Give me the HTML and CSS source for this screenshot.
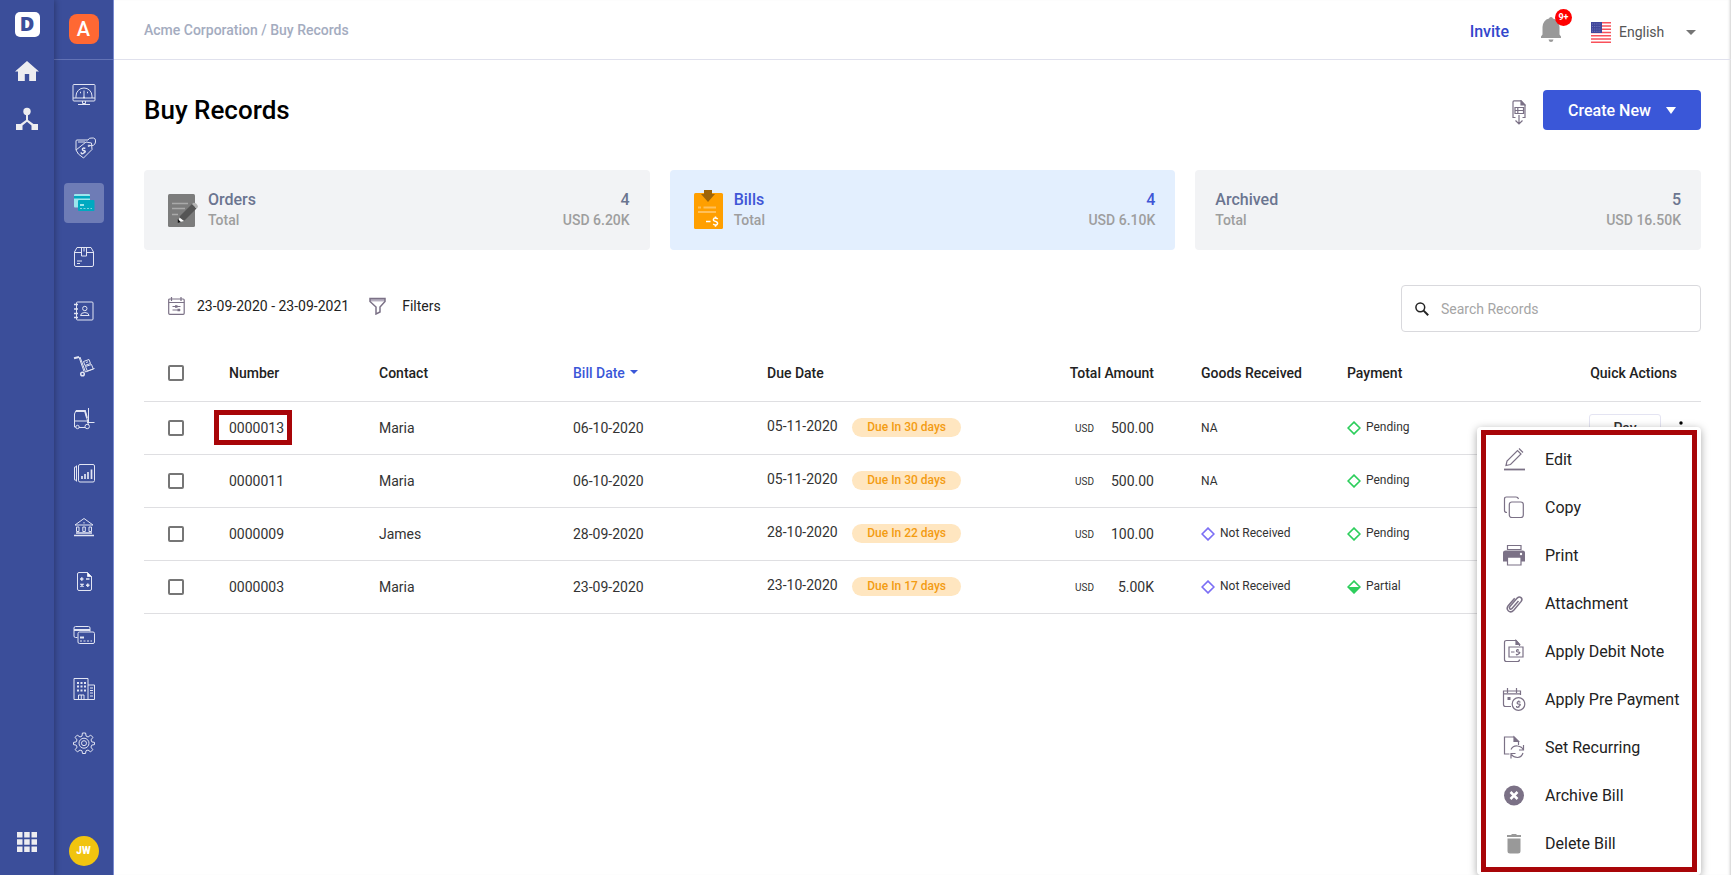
FILE: index.html
```html
<!DOCTYPE html>
<html lang="en">
<head>
    <meta charset="UTF-8">
    <meta name="viewport" content="width=device-width, initial-scale=1.0">
    <title>Buy Records</title>
    <link rel="stylesheet" href="styles.css">
</head>
<body>
    <div class="app">
        <!-- Main rail -->
        <nav class="rail rail-main" aria-label="Main">
            <a href="#" class="logo" aria-label="Start">D</a>
            <a href="#" class="rail-link" aria-label="Home">
                <svg width="24" height="24" viewBox="0 0 24 24" fill="#ededf0"><path d="M12 2L0 12.400h3V22h6.800v-7h4.400v7H21v-9.600h3z"/></svg>
            </a>
            <a href="#" class="rail-link" aria-label="Network">
                <svg width="24" height="24" viewBox="0 0 24 24" fill="#ededf0"><circle cx="12" cy="4.500" r="3.700"/><path d="M11 7h2v6l5.500 4H23v6h-6.500v-4.500L12 14.800l-4.500 3.700V23H1v-6h4.500l5.500-4z"/></svg>
            </a>
            <a href="#" class="rail-link rail-bottom" aria-label="Apps">
                <svg width="20" height="20" viewBox="0 0 20 20" fill="#ededf0"><path d="M0 0h5.500v5.500H0zM7.200 0h5.500v5.500H7.200zM14.500 0H20v5.500h-5.500zM0 7.200h5.500v5.500H0zM7.200 7.200h5.500v5.500H7.200zM14.500 7.200H20v5.500h-5.500zM0 14.500h5.500V20H0zM7.200 14.500h5.500V20H7.200zM14.500 14.500H20V20h-5.500z"/></svg>
            </a>
        </nav>

        <!-- Company rail -->
        <nav class="rail rail-company" aria-label="Company">
            <div class="company"><a href="#" class="company-logo" aria-label="Acme Corporation">A</a></div>
            <div class="modules">
                <a href="#" class="module" aria-label="Dashboard">
                    <svg class="line" viewBox="0 0 24 24"><rect x="1" y="1.500" width="22" height="16.500" rx="1"/><path d="M1 15h22M4 15v-2a8 8 0 0 1 16 0v2M10.500 18v2.500h3V18M6 21.500h12M12 7.500v7"/><path d="M7 13h.01M8 9.500h1M15 9.500h1M17 13h.01M11 14.500h2" stroke-width="1.600"/></svg>
                </a>
                <a href="#" class="module" aria-label="Sell">
                    <svg class="line" viewBox="0 0 24 24"><path d="M4 13V4q0-1 1-1h11M4 13l10-8 5.500 1 .5 6.500L11.500 21Q5 17 4 13z"/><path d="M6 5h7M17.500 9.500h-1.200v-1.300h1.200M17 8.500q6 1 6.500-3.500T20 1q-3-.5-4 2"/><path d="M13.300 11.500q-2.500-1-2.800.5t1.800 1.800-.5 2.200-2.600-.8" stroke-width="1.500"/></svg>
                </a>
                <a href="#" class="module active" aria-label="Buy">
                    <svg viewBox="0 0 24 24"><rect x="2" y="3" width="16" height="13.500" rx="1" fill="#9ce5ec"/><path d="M2 5h16v2.500H2z" fill="#00a9c0"/><rect x="6" y="9" width="16.500" height="11" rx="1" fill="#00a9c0"/><path d="M8 13h4v2H8z" fill="#9ce5ec"/><path d="M8 17.500h12" stroke="#7fd5df" stroke-dasharray="2 1.500"/></svg>
                </a>
                <a href="#" class="module" aria-label="Inventory">
                    <svg class="line" viewBox="0 0 24 24"><path d="M2.500 7L5 2.500h14L21.500 7v13q0 1.500-1.500 1.500H4q-1.500 0-1.500-1.500zM2.500 7.500h7M14.500 7.500h7M9.500 2.500V11h5V2.500M12 2.500v4M5 16h5M5 18.500h3"/></svg>
                </a>
                <a href="#" class="module" aria-label="Contacts">
                    <svg class="line" viewBox="0 0 24 24"><rect x="4.500" y="3" width="16.500" height="18" rx="1"/><circle cx="12.800" cy="9.500" r="2.200"/><path d="M8.500 16.500q.5-3 4.300-3t4.300 3z"/><path d="M2 5.500h4M2 10h4M2 14.500h4M2 18.500h4" stroke-width="1.700"/></svg>
                </a>
                <a href="#" class="module" aria-label="Shipping">
                    <svg class="line" viewBox="0 0 24 24"><path d="M8 4l5.500 15 9-3.500M7 4l5 14.500"/><path d="M2 5.200L7 4" stroke-width="2.200"/><circle cx="10.500" cy="21" r="1.800" stroke-width="1.500"/><path d="M11.500 8.500l5.500-2 1.500 4-5.500 2zM13.500 13.500l6-2 1.800 4.500-6 2zM14 9.500l2-.7"/></svg>
                </a>
                <a href="#" class="module" aria-label="Warehouse">
                    <svg class="line" viewBox="0 0 24 24"><path d="M4 20H2.500V7L4 3.500h9L16.500 18M2.500 14h13M7 20.500h6M16.500 1v14.500M15 15.500h7.500"/><path d="M4 4h9l2 7" stroke-width="1.800"/><circle cx="5.500" cy="20" r="1.700"/><circle cx="15.200" cy="19.500" r="2.200"/></svg>
                </a>
                <a href="#" class="module" aria-label="Reports">
                    <svg class="line" viewBox="0 0 24 24"><rect x="6.500" y="3.500" width="16" height="17.500" rx="1.500"/><path d="M4.500 4.500v16M2.500 6.500v12M2 6.500l2.500-1M2 18.500l2.500 1"/><path d="M10 18v-3M13 18v-5M16 18v-7M19.500 18V8.500" stroke-width="1.700"/></svg>
                </a>
                <a href="#" class="module" aria-label="Banking">
                    <svg class="line" viewBox="0 0 24 24"><path d="M3 10L12 3.500l9 6.500zM12 7v1.500M4.500 12v4.500h2.500V12zM10.800 12v4.500h2.500V12zM17 12v4.500h2.500V12z"/><path d="M4 18h16M2 20.500h20" stroke-width="1.500"/></svg>
                </a>
                <a href="#" class="module" aria-label="Accounting">
                    <svg class="line" viewBox="0 0 24 24"><path d="M15.500 3.500H7Q5.500 3.500 5.500 5v15Q5.500 21.500 7 21.500h11q1.500 0 1.500-1.500V7.500z"/><path d="M15.500 3.500v4h4z" fill="#fff"/><path d="M8 10h3.500M9.800 8.300v3.500M14 10h3.500M8.500 14.800l3 3M11.500 14.800l-3 3M14 16.300h3.500M15.800 14.500v3.500" stroke-width="1.500"/></svg>
                </a>
                <a href="#" class="module" aria-label="Expenses">
                    <svg class="line" viewBox="0 0 24 24"><path d="M5.500 14.500H3.500Q2 14.500 2 13V5Q2 3.500 3.500 3.500h13Q18 3.500 18 5v3.500"/><path d="M2 7h16" stroke-width="2"/><rect x="6" y="9" width="16.500" height="11.500" rx="1.500"/><path d="M8 14.500h4" stroke-width="2"/><path d="M8 18h12" stroke-dasharray="2 1.500"/></svg>
                </a>
                <a href="#" class="module" aria-label="Organisation">
                    <svg class="line" viewBox="0 0 24 24"><path d="M2 1.500h14v21H2zM16 8h6.500v14.500H16M18 11h3M18 13.500h3M18 16h3M18 19h3M6.500 22v-4h5.500v4M9.300 18v4"/><path d="M5 6h9M5 9.500h9M5 13.500h9" stroke-width="2" stroke-dasharray="2 1.500"/></svg>
                </a>
                <a href="#" class="module" aria-label="Settings">
                    <svg class="line" viewBox="0 0 24 24"><path d="M10.400 2h3.200l.5 3.100 2 .9 2.600-1.900 2.200 2.200L19 8.900l.8 2 2.700.5v2.200l-2.700.5-.9 2 1.900 2.600-2.200 2.200-2.600-1.900-2 .8-.5 2.700h-3l-.5-2.700-2-.8-2.600 1.900-2.200-2.200 1.900-2.600-.9-2-2.700-.5v-2.200l2.700-.5.8-2-1.900-2.600 2.200-2.200L8 6l2-.9z"/><circle cx="12" cy="12.200" r="5"/><circle cx="12" cy="12.200" r="2.500"/></svg>
                </a>
            </div>
            <a href="#" class="avatar" aria-label="Profile">JW</a>
        </nav>

        <div class="main">
            <header class="topbar">
                <div class="breadcrumb">Acme Corporation / Buy Records</div>
                <a href="#" class="invite">Invite</a>
                <button class="bell" aria-label="Notifications">
                    <svg width="20" height="26" viewBox="0 0 20 26" fill="#999"><path d="M10 0Q8.300 0 8 1.500 2 3 1.500 10v7.500L0 19.500V21h20v-1.500l-1.500-2V10Q18 3 12 1.500 11.700 0 10 0zM7.500 22.500h5q-.5 2.500-2.500 2.500t-2.500-2.500z"/></svg>
                    <span class="bell-count">9+</span>
                </button>
                <div class="language">
                    <svg width="20" height="21" viewBox="0 0 20 21"><path fill="#fff" d="M0 0h20v21H0z"/><path stroke="#f9505a" stroke-width="1.600" d="M0 .8h20M0 4h20M0 7.200h20M0 10.500h20M0 13.700h20M0 17h20M0 20.200h20"/><path fill="#41479b" d="M0 0h11v11H0z"/><path stroke="#7f85c4" stroke-width=".8" stroke-dasharray="1 1.200" d="M1 2h9M1 4.500h9M1 7h9M1 9.300h9"/></svg>
                    <select aria-label="Language"><option>English</option></select>
                    <svg class="language-arrow" width="10" height="5" viewBox="0 0 10 5"><path fill="#757575" d="M0 0h10L5 5z"/></svg>
                </div>
            </header>

            <main class="content">
                <div class="page-head">
                    <h1>Buy Records</h1>
                    <button class="export" aria-label="Export">
                        <svg width="14" height="26" viewBox="0 0 14 26" fill="none" stroke="#7b7186" stroke-width="1.200"><path d="M3.500 17.500H1V2Q1 .8 2 .8h7L13 5v12.500h-2.500M3 7.500h8.500v6H3zM3 10.500h8.500M5.800 7.500v6M7 15v9M3.500 20.500L7 24l3.500-3.500"/><path d="M9 .8V5h4z" fill="#7b7186"/></svg>
                    </button>
                    <button class="create">Create New <svg width="10" height="7" viewBox="0 0 10 7" fill="#fff"><path d="M0 0h10L5 7z"/></svg></button>
                </div>

                <!-- Totals -->
                <div class="cards">
                    <a href="#" class="card">
                        <svg class="card-icon" width="32" height="40" viewBox="0 0 32 40"><rect y="4" width="27" height="33" rx="1.500" fill="#7c7c7c"/><path d="M4 13.500h16M4 18.500h13M4 24.500h6" stroke="#a9a9a9" stroke-width="1.500"/><path d="M10 32l2-6L24 14l4.500 4.500-12 12z" fill="#555"/><path d="M24 14l1.500-1.200q3.500 0 4.500 4.200l-1.500 1.500z" fill="#b5b5b5"/><path d="M10 32.500l1.500-5 4.500 3.500z" fill="#fff"/><path d="M9.800 33v-4l3 3z" fill="#111"/></svg>
                        <span class="card-text"><b>Orders</b><small>Total</small></span>
                        <span class="card-text card-sum"><b>4</b><small>USD 6.20K</small></span>
                    </a>
                    <a href="#" class="card selected">
                        <svg class="card-icon" width="32" height="40" viewBox="0 0 32 40"><rect y="3" width="29" height="36" rx="1.500" fill="#ff9f00"/><path d="M10 0h8v4h3l-7 8-7-8h3z" fill="#9e6408"/><path d="M4 17.500h3M9.500 17.500H22M4 22h18" stroke="#ffc05a" stroke-width="1.800"/><path d="M12 31.500h4.500" stroke="#fff" stroke-width="1.500"/><path d="M23.800 29q-2-1.600-3.600-.8-1.600 1.500 0 2.700l2.400 1q1.800 1.500.2 2.900-1.700.8-3.600-.8M21.500 26.500v2M21.500 34.800v2" fill="none" stroke="#fff" stroke-width="1.500"/></svg>
                        <span class="card-text"><b>Bills</b><small>Total</small></span>
                        <span class="card-text card-sum"><b>4</b><small>USD 6.10K</small></span>
                    </a>
                    <a href="#" class="card">
                        <span class="card-text"><b>Archived</b><small>Total</small></span>
                        <span class="card-text card-sum"><b>5</b><small>USD 16.50K</small></span>
                    </a>
                </div>

                <div class="toolbar">
                    <button class="tool">
                        <svg width="17" height="18" viewBox="0 0 17 18" fill="none" stroke="#7b7186"><rect x=".7" y="2" width="15.500" height="15.300" rx="1" stroke-width="1.200"/><path d="M.7 5.500h15.500M3.500 0v4M13 0v4" stroke-width="1.200"/><path d="M4.500 9.500h8M4.500 13h8"/><path d="M7 9.500h2.500M9.500 13H12" stroke-width="2.600"/></svg>
                        23-09-2020 - 23-09-2021
                    </button>
                    <button class="tool tool-filter">
                        <svg width="17" height="18" viewBox="0 0 17 18" fill="none" stroke="#7b7186" stroke-width="1.500"><path d="M1 3.200h15" stroke="#b7b0c0" stroke-width="2.500"/><path d="M1 1.500h15v3L11 10v5l-4 2V10L1 4.500z"/></svg>
                        Filters
                    </button>
                    <label class="search">
                        <svg width="14" height="14" viewBox="0 0 14 14" fill="none" stroke="#222" stroke-width="1.500"><circle cx="5.300" cy="5.300" r="4.400"/><path d="M8.600 8.600l4.600 4.600" stroke-width="2"/></svg>
                        <input type="text" placeholder="Search Records" aria-label="Search Records">
                    </label>
                </div>

                <!-- Bills table -->
                <table class="records">
                    <colgroup>
                        <col class="col-check"><col class="col-number"><col class="col-contact"><col class="col-date"><col class="col-due"><col class="col-amount"><col class="col-goods"><col class="col-payment"><col class="col-actions">
                    </colgroup>
                    <thead>
                        <tr>
                            <th class="check"><input type="checkbox" aria-label="Select all"></th>
                            <th>Number</th>
                            <th>Contact</th>
                            <th class="sorted">Bill Date <svg width="8" height="4" viewBox="0 0 8 4"><path fill="#3a57d8" d="M0 0h8L4 4z"/></svg></th>
                            <th>Due Date</th>
                            <th class="amount">Total Amount</th>
                            <th>Goods Received</th>
                            <th>Payment</th>
                            <th class="actions">Quick Actions</th>
                        </tr>
                    </thead>
                    <tbody>
                        <tr>
                            <td class="check"><input type="checkbox" aria-label="Select 0000013"></td>
                            <td><span class="marked">0000013</span></td>
                            <td>Maria</td>
                            <td>06-10-2020</td>
                            <td>05-11-2020 <span class="due">Due In 30 days</span></td>
                            <td class="amount"><small>USD</small><span>500.00</span></td>
                            <td class="status">NA</td>
                            <td class="status"><svg viewBox="0 0 13 13"><path d="M6.500 1L12 6.500 6.500 12 1 6.500z" fill="none" stroke="#2dce5c" stroke-width="1.500"/></svg>Pending</td>
                            <td class="row-actions"><button class="pay">Pay</button><button class="more" aria-label="More"><svg width="4" height="16" viewBox="0 0 4 16"><circle cx="2" cy="2" r="1.700"/><circle cx="2" cy="8" r="1.700"/><circle cx="2" cy="14" r="1.700"/></svg></button></td>
                        </tr>
                        <tr>
                            <td class="check"><input type="checkbox" aria-label="Select 0000011"></td>
                            <td>0000011</td>
                            <td>Maria</td>
                            <td>06-10-2020</td>
                            <td>05-11-2020 <span class="due">Due In 30 days</span></td>
                            <td class="amount"><small>USD</small><span>500.00</span></td>
                            <td class="status">NA</td>
                            <td class="status"><svg viewBox="0 0 13 13"><path d="M6.500 1L12 6.500 6.500 12 1 6.500z" fill="none" stroke="#2dce5c" stroke-width="1.500"/></svg>Pending</td>
                            <td></td>
                        </tr>
                        <tr>
                            <td class="check"><input type="checkbox" aria-label="Select 0000009"></td>
                            <td>0000009</td>
                            <td>James</td>
                            <td>28-09-2020</td>
                            <td>28-10-2020 <span class="due">Due In 22 days</span></td>
                            <td class="amount"><small>USD</small><span>100.00</span></td>
                            <td class="status"><svg viewBox="0 0 13 13"><path d="M6.500 1L12 6.500 6.500 12 1 6.500z" fill="none" stroke="#7c6ff5" stroke-width="1.500"/></svg>Not Received</td>
                            <td class="status"><svg viewBox="0 0 13 13"><path d="M6.500 1L12 6.500 6.500 12 1 6.500z" fill="none" stroke="#2dce5c" stroke-width="1.500"/></svg>Pending</td>
                            <td></td>
                        </tr>
                        <tr>
                            <td class="check"><input type="checkbox" aria-label="Select 0000003"></td>
                            <td>0000003</td>
                            <td>Maria</td>
                            <td>23-09-2020</td>
                            <td>23-10-2020 <span class="due">Due In 17 days</span></td>
                            <td class="amount"><small>USD</small><span>5.00K</span></td>
                            <td class="status"><svg viewBox="0 0 13 13"><path d="M6.500 1L12 6.500 6.500 12 1 6.500z" fill="none" stroke="#7c6ff5" stroke-width="1.500"/></svg>Not Received</td>
                            <td class="status"><svg viewBox="0 0 13 13"><path d="M6.500 1L12 6.500 6.500 12 1 6.500z" fill="none" stroke="#2dce5c" stroke-width="1.500"/><path d="M1 6.500h11L6.500 12z" fill="#2dce5c"/></svg>Partial</td>
                            <td></td>
                        </tr>
                    </tbody>
                </table>

                <!-- Row menu -->
                <div class="menu">
                    <button><svg viewBox="0 0 24 24"><path d="M4 18.500l1-4.500L15.500 3.500l3.500 3.500L8.500 17.500zM17 1.500l4 4"/><path d="M2 22.500h21" stroke-width="1.800"/></svg>Edit</button>
                    <button><svg viewBox="0 0 24 24"><path d="M5 17.500Q2.500 17.500 2.500 15.500V4q0-2 2-2h9.500q2 0 2.500 2"/><rect x="7.300" y="7" width="14" height="15.500" rx="2.500"/></svg>Copy</button>
                    <button><svg viewBox="0 0 24 24"><path d="M5.500 2.500H19v4H5.500zM5.500 14H19v8H5.500z"/><path d="M3.500 7.500h17q2.500 0 2.500 2v9h-4v-4H5.500v4H1v-9q0-2 2.500-2z" fill="#7b7186" stroke="none"/><circle cx="19" cy="11" r="1.200" fill="#fff" stroke="none"/></svg>Print</button>
                    <button><svg viewBox="0 0 24 24"><path d="M15.500 9l-6.300 7.200q-1.200 1.500-2.300.6t0-2.300l7.300-8.400q2-2 3.800-.5t.2 3.800l-7.500 8.800q-2.700 2.900-5.200.8t-.3-5.200l6.500-7.500" transform="translate(1 1)" stroke-width="1.500"/></svg>Attachment</button>
                    <button><svg viewBox="0 0 24 24"><path d="M14 1.500H4.500Q2.500 1.500 2.500 3.500v17q0 2 2 2h11q2 0 2-2M17.500 7V5.500L14 1.500M7 8h14v10H7zM9 13h3.500M17 11.200q-2.500-.8-2.500.6t2.300 1.400-.3 1.800-2-.2M15.700 10v1M15.700 15v1"/><path d="M14 1.500V5.500h3.500z" fill="#7b7186"/></svg>Apply Debit Note</button>
                    <button><svg viewBox="0 0 24 24"><path d="M9 19.500H3.500q-2 0-2-2V4h17v4M1.500 6.800h17M5.500 1v5M14.500 1v5"/><path d="M5.500 10h3v3h-3z" fill="#7b7186" stroke="none"/><circle cx="16.500" cy="17" r="6.300"/><path d="M18.500 15.200q-3-1.200-3.300.4t2 1.500-.2 2.200-2.500-.4M16.800 13.500v1.200M16.800 19.500v1.200"/></svg>Apply Pre Payment</button>
                    <button><svg viewBox="0 0 24 24"><path d="M7.500 19h-5V2h9.500L16.500 6.500V10M9 14.500q2-4 6.500-3.500t6 4M21 18q-1.500 4.500-5.500 4.500t-6-3M21.500 10v5H17M9 23.500v-5h4.500"/><path d="M12 2v4.500h4.500z" fill="#7b7186"/></svg>Set Recurring</button>
                    <button><svg viewBox="0 0 24 24"><circle cx="12" cy="12.500" r="10" fill="#7b7186" stroke="none"/><path d="M8.500 9l7 7M15.500 9l-7 7" stroke="#fff" stroke-width="2.500"/></svg>Archive Bill</button>
                    <button><svg viewBox="0 0 24 24"><path d="M5.500 7.500h13V20q0 2.500-2.500 2.500H8q-2.500 0-2.500-2.500zM5 4h4l1-1h4l1 1h4v2H5z" fill="#999" stroke="none"/></svg>Delete Bill</button>
                </div>
            </main>
        </div>
    </div>
</body>
</html>
```
FILE: styles.css
```css
* { box-sizing: border-box; }
body { margin: 0; font-family: Roboto, "Liberation Sans", sans-serif; font-size: 14px; color: #222; background: #fff; }
a { color: inherit; text-decoration: none; }
button { padding: 0; border: 0; background: none; font: inherit; color: inherit; cursor: pointer; }
.app { display: flex; height: 100vh; overflow: hidden; }

/* Side rails */
.rail { display: flex; flex-direction: column; align-items: center; flex: none; background: #3b4e9a; color: #fff; }
.rail-main { width: 54px; padding: 12px 0 23px; z-index: 1; box-shadow: 1px 0 6px rgba(0, 0, 0, 0.3); }
.logo { width: 25px; height: 25px; margin-bottom: 22px; border-radius: 5px; background: #fff; color: #3b4e9a; font-family: "Open Sans", Roboto, sans-serif; font-size: 20px; font-weight: 800; line-height: 24px; text-align: center; }
.rail-link { display: block; height: 24px; margin-bottom: 24px; }
.rail-bottom { height: 20px; margin: auto 0 0; }
.rail-company { width: 60px; padding-bottom: 9px; border-right: 1px solid #7a8bd0; }
.company { width: 100%; height: 60px; padding-top: 14px; border-bottom: 1px solid #6272b5; }
.company-logo { display: block; width: 30px; height: 30px; margin: 0 auto; border-radius: 8px; background: #ff6833; font-size: 20px; font-weight: 500; line-height: 30px; text-align: center; }
.modules { display: flex; flex-direction: column; gap: 14px; padding-top: 15px; }
.module { display: flex; align-items: center; justify-content: center; width: 40px; height: 40px; border-radius: 4px; }
.module svg { width: 24px; height: 24px; }
.module.active { background: #6e7cb6; }
.line { fill: none; stroke: #e2e5f3; stroke-width: 1; }
.avatar { width: 30px; height: 30px; margin-top: auto; border-radius: 50%; background: #f1c40f; font-size: 10px; font-weight: 900; line-height: 30px; text-align: center; }

/* Top bar */
.main { flex: 1; min-width: 0; box-shadow: inset -3px 0 3px -2px #ccc; }
.topbar { display: flex; align-items: center; height: 60px; padding: 0 35px 0 30px; border-bottom: 1px solid #e0e1ed; }
.breadcrumb { margin-right: auto; color: #a4acbf; font-weight: 500; }
.invite { margin-right: 32px; padding-top: 4px; color: #3347cc; font-size: 16px; font-weight: 500; }
.bell { position: relative; height: 26px; margin-right: 30px; }
.bell svg { display: block; }
.bell-count { position: absolute; top: -8px; right: -11px; width: 17px; height: 17px; border-radius: 50%; background: #f00; color: #fff; font-size: 9px; font-weight: 700; line-height: 17px; text-align: center; }
.language { display: flex; align-items: center; padding-top: 5px; }
.language select { width: 100px; margin-left: 8px; margin-right: -33px; padding: 0; border: 0; background: none; appearance: none; color: #555; font: inherit; }
.language-arrow { pointer-events: none; }

/* Page head and totals */
.content { position: relative; padding: 30px; }
.page-head { display: flex; align-items: center; height: 40px; margin-bottom: 40px; }
.page-head h1 { margin: 0 auto 0 0; color: #000; font-size: 26px; font-weight: 500; }
.export { height: 26px; margin: 5px 17px 0 0; }
.export svg { display: block; }
.create { display: flex; align-items: center; justify-content: center; gap: 15px; width: 158px; height: 40px; border-radius: 4px; background: #3a57d8; color: #fff; font-size: 16px; font-weight: 500; }
.cards { display: grid; grid-template-columns: repeat(3, 1fr); gap: 20px; margin-bottom: 35px; }
.card { display: flex; align-items: center; height: 80px; padding: 0 20px; border-radius: 4px; background: #f2f3f5; color: #6b7590; }
.card-icon { margin: 0 8px 0 4px; }
.card-text { display: flex; flex-direction: column; }
.card-text b { font-size: 16px; font-weight: 500; line-height: 20px; }
.card-text small { color: #9e9e9e; font-size: 14px; font-weight: 500; line-height: 20px; }
.card-sum { margin-left: auto; text-align: right; }
.card.selected { background: #e3effe; color: #3f55d6; }

/* Toolbar */
.toolbar { display: flex; align-items: flex-start; margin-bottom: 14px; padding-left: 24px; }
.tool { display: flex; align-items: center; gap: 12px; height: 41px; margin-right: 20px; }
.tool-filter { gap: 16px; }
.search { display: flex; align-items: center; gap: 12px; width: 300px; height: 47px; margin-left: auto; padding: 0 13px; border: 1px solid #d9d9dd; border-radius: 4px; }
.search input { flex: 1; min-width: 0; padding: 0; border: 0; outline: 0; font: inherit; }
.search input::placeholder { color: #a5a5a5; }

/* Records table */
.records { width: 100%; border-collapse: collapse; table-layout: fixed; }
.col-check { width: 85px; }
.col-number { width: 150px; }
.col-contact { width: 194px; }
.col-date { width: 194px; }
.col-due { width: 233px; }
.col-amount { width: 201px; }
.col-goods { width: 146px; }
.col-payment { width: 154px; }
.col-actions { width: 200px; }
.records th, .records td { height: 53px; padding: 0; border-bottom: 1px solid #dfdfe2; text-align: left; white-space: nowrap; }
.records th { height: 55px; font-weight: 500; }
.records td { color: #333; }
.records .check { padding-left: 24px; }
.records input { display: block; width: 16px; height: 16px; margin: 0; border: 2px solid #767676; border-radius: 2px; appearance: none; }
.records .sorted { color: #3a57d8; }
.sorted svg { margin-left: 2px; vertical-align: 4px; }
.records .amount { padding-right: 47px; text-align: right; }
.amount small { font-size: 10px; vertical-align: 1px; }
.amount span { display: inline-block; min-width: 60px; }
.due { display: inline-block; width: 109px; height: 19px; margin-left: 11px; border-radius: 10px; background: #ffe6c0; color: #f39c12; font-size: 12px; font-weight: 500; line-height: 19px; text-align: center; vertical-align: middle; }
.records .status { font-size: 12px; }
.status svg { width: 14px; height: 14px; margin-right: 5px; vertical-align: -4px; }
.records .actions { padding-right: 24px; text-align: right; }
.records .row-actions { padding-right: 18px; text-align: right; }
.pay { width: 72px; height: 28px; border: 1px solid #e4e4f2; border-radius: 3px; font-weight: 500; }
.more { margin-left: 18px; vertical-align: middle; }
.more svg { display: block; }
.marked { margin-left: -15px; padding: 5px 3px 4px 10px; border: 5px solid #a80508; }

/* Row menu */
.menu { position: absolute; top: 367px; right: 30px; width: 224px; padding: 8px 0; border-radius: 4px; background: #fff; box-shadow: 0 2px 8px rgba(0, 0, 0, 0.35); }
.menu::after { content: ""; position: absolute; inset: 3px 4px; border: 5px solid #a80508; pointer-events: none; }
.menu button { display: flex; align-items: center; gap: 19px; width: 100%; height: 48px; padding-left: 25px; font-size: 16px; white-space: nowrap; }
.menu svg { flex: none; width: 24px; height: 24px; fill: none; stroke: #7b7186; stroke-width: 1.2; }
```
